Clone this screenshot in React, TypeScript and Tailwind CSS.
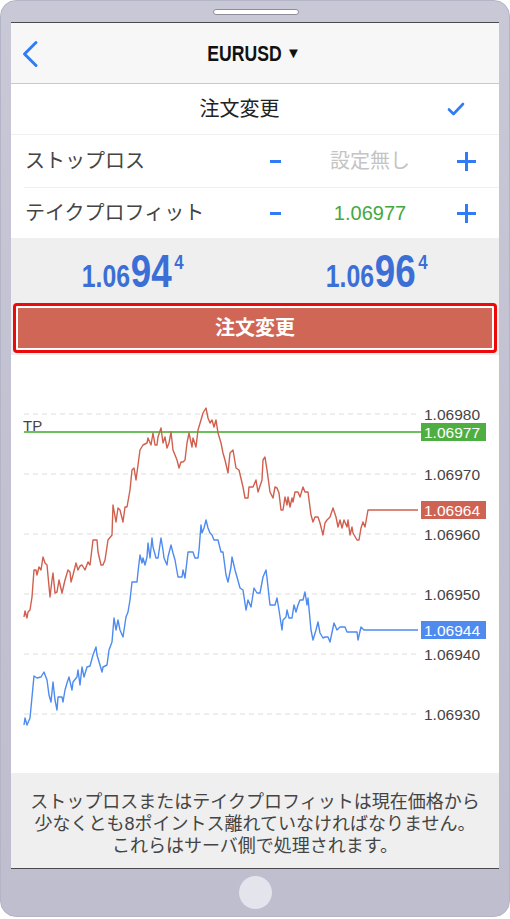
const JP = { fontFamily: '"Liberation Sans", "Noto Sans CJK JP", sans-serif' };
const SANS = { fontFamily: '"Liberation Sans", sans-serif' };

const red: [number, number][] = [
  [24,617],[25,611],[27,618],[28,612],[30,610],[32,597],[34,570],[36,570],[37,575],[39,567],[41,570],[43,557],[45,563],[47,565],[50,597],[52,580],[53,573],[55,593],[57,592],[59,580],[62,593],[65,580],[68,570],[70,572],[71,582],[73,575],[76,563],[78,570],[80,566],[82,565],[85,570],[88,562],[90,565],[93,540],[97,540],[98,552],[101,565],[103,565],[105,560],[108,540],[112,535],[113,505],[116,522],[118,508],[120,510],[123,522],[125,507],[127,507],[130,490],[132,470],[134,468],[136,480],[140,450],[143,445],[147,443],[148,438],[151,445],[153,433],[155,445],[157,445],[158,437],[161,428],[163,443],[165,437],[167,448],[169,443],[171,432],[173,450],[177,460],[179,468],[181,462],[183,462],[185,460],[187,443],[189,433],[192,447],[193,438],[196,447],[198,430],[201,420],[203,413],[206,408],[208,418],[210,423],[212,420],[214,427],[216,420],[218,433],[221,443],[223,453],[225,460],[228,473],[230,453],[233,450],[236,468],[239,470],[243,487],[245,498],[248,498],[249,487],[253,487],[256,480],[258,492],[262,480],[263,460],[265,457],[267,470],[270,492],[273,498],[275,487],[277,488],[279,493],[281,510],[283,510],[285,497],[287,505],[288,497],[290,507],[292,498],[293,502],[295,492],[298,492],[300,497],[303,487],[305,492],[308,492],[311,515],[313,522],[315,517],[318,517],[320,523],[323,535],[325,523],[327,520],[330,517],[333,508],[336,517],[338,527],[340,520],[342,528],[344,520],[347,527],[348,520],[350,535],[352,527],[353,533],[357,540],[359,540],[361,528],[363,522],[365,527],[368,510],[418,510],
];

const blue: [number, number][] = [
  [24,725],[25,718],[27,725],[30,718],[34,676],[37,678],[41,677],[44,672],[47,680],[49,695],[51,702],[53,682],[55,700],[57,710],[58,697],[62,697],[63,702],[65,690],[67,683],[69,677],[72,690],[73,682],[77,677],[78,670],[80,685],[82,667],[84,677],[87,667],[90,666],[93,655],[96,647],[97,655],[100,665],[102,672],[103,667],[107,665],[109,650],[112,642],[114,618],[116,630],[118,620],[120,630],[123,637],[126,617],[128,612],[130,600],[132,582],[137,582],[138,572],[140,555],[142,563],[143,558],[145,565],[147,557],[148,543],[150,558],[152,538],[153,547],[156,558],[158,558],[161,538],[163,550],[164,558],[167,565],[168,557],[171,545],[173,553],[175,560],[178,577],[182,577],[183,570],[185,578],[188,552],[193,552],[195,558],[198,558],[199,550],[201,525],[202,533],[204,528],[206,520],[208,528],[210,533],[212,535],[214,540],[218,540],[221,552],[223,552],[226,575],[228,582],[231,567],[232,557],[235,570],[237,577],[240,588],[243,590],[246,610],[248,600],[251,607],[254,588],[257,593],[260,593],[263,577],[266,570],[267,578],[270,605],[275,605],[277,598],[279,610],[282,630],[283,620],[286,617],[287,610],[289,618],[292,618],[294,605],[296,612],[298,605],[300,600],[303,600],[305,592],[307,605],[308,598],[311,630],[313,640],[316,630],[318,622],[320,633],[323,638],[325,637],[328,637],[330,642],[334,623],[337,630],[340,627],[345,627],[347,632],[357,632],[358,640],[361,627],[364,630],[368,630],[418,630],
];

const grid = [
  { y: 414, label: '1.06980' },
  { y: 474, label: '1.06970' },
  { y: 534, label: '1.06960' },
  { y: 594, label: '1.06950' },
  { y: 654, label: '1.06940' },
  { y: 714, label: '1.06930' },
];

const tags = [
  { y: 432, label: '1.06977', color: '#4fae42' },
  { y: 510, label: '1.06964', color: '#cf6353' },
  { y: 630, label: '1.06944', color: '#4f8bee' },
];

const pts = (p: [number, number][]) => p.map(([x, y]) => `${x},${y}`).join(' ');

function Chart() {
  return (
    <svg width="488" height="418" viewBox="11 355 488 418" className="block" style={SANS}>
      {grid.map((g) => (
        <g key={g.label}>
          <line x1="24" x2="418" y1={g.y} y2={g.y} stroke="#dcdcdc" strokeWidth="1" strokeDasharray="5 4" />
          <text x="424" y={g.y + 6} fontSize="15.5" fill="#444">{g.label}</text>
        </g>
      ))}
      <text x="23" y="431" fontSize="15" fill="#444">TP</text>
      <line x1="24" x2="421" y1="432" y2="432" stroke="#6cbf5c" strokeWidth="2" />
      <polyline points={pts(red)} fill="none" stroke="#d05f4e" strokeWidth="1.4" strokeLinejoin="round" />
      <polyline points={pts(blue)} fill="none" stroke="#4d8bf0" strokeWidth="1.4" strokeLinejoin="round" />
      {tags.map((t) => (
        <g key={t.label}>
          <rect x="421" y={t.y - 9} width="65" height="18" fill={t.color} />
          <text x="424" y={t.y + 6} fontSize="15.5" fill="#fff">{t.label}</text>
        </g>
      ))}
    </svg>
  );
}

function Price({ base, big, sup }: { base: string; big: string; sup: string }) {
  return (
    <div className="flex-1 flex justify-center">
      <div className="flex items-baseline leading-none font-bold text-[#3b6fd6] scale-x-[0.8]" style={SANS}>
        <span className="text-[31px]">{base}</span>
        <span className="text-[46px] ml-[1px]">{big}</span>
        <span className="text-[21px] self-start mt-[3px] ml-[3px]">{sup}</span>
      </div>
    </div>
  );
}

function Stepper({ label, value, valueClass }: { label: string; value: string; valueClass: string }) {
  return (
    <div className="flex items-center h-full">
      <div className="flex-1 pl-[14px] text-[20px] text-[#444]" style={JP}>{label}</div>
      <div className="w-[40px] flex justify-center">
        <div className="w-[11px] h-[3px] bg-[#2f7cf6]" />
      </div>
      <div className={`w-[150px] text-center text-[20px] ${valueClass}`} style={JP}>{value}</div>
      <div className="w-[42px] flex justify-center">
        <div className="relative w-[19px] h-[19px]">
          <div className="absolute left-0 top-[8px] w-[19px] h-[3px] bg-[#2f7cf6]" />
          <div className="absolute top-0 left-[8px] w-[3px] h-[19px] bg-[#2f7cf6]" />
        </div>
      </div>
      <div className="w-[12px]" />
    </div>
  );
}

export default function App() {
  return (
    <div className="w-[510px] h-[919px] bg-white">
      <div className="w-[510px] h-[917px] rounded-[16px] bg-gradient-to-b from-[#c8c8d7] via-[#c1c1d1] to-[#bebecf] border border-[#b4b4c7] pt-[21px] px-[10px] relative">
        <div className="absolute left-[212px] top-[8px] w-[86px] h-[6px] rounded-full bg-white border border-[#8f8f9c]" />
        <div className="w-[488px] h-[847px] bg-white border-t border-b border-[#4a4a4a] flex flex-col">
          <div className="h-[61px] bg-[#f7f7f7] border-b border-[#c9c9cc] relative flex items-center justify-center shrink-0">
            <svg className="absolute left-[10px] top-[17px]" width="18" height="28" viewBox="0 0 18 28">
              <path d="M15 2.5 L3.5 14 L15 25.5" fill="none" stroke="#2f7cf6" strokeWidth="3" strokeLinecap="round" strokeLinejoin="round" />
            </svg>
            <div className="flex items-center gap-[4px] text-[#111] font-bold -ml-[2px]" style={SANS}>
              <span className="text-[22px] inline-block scale-x-[0.8] -mx-[9px]">EURUSD</span>
              <span className="text-[15px]">▼</span>
            </div>
          </div>
          <div className="h-[51px] border-b border-[#f0f0f0] relative flex items-center shrink-0">
            <div className="w-full pr-[31px] text-center text-[20px] text-[#222]" style={JP}>注文変更</div>
            <svg className="absolute left-[436px] top-[18px]" width="18" height="14" viewBox="0 0 18 14">
              <path d="M2 7.5 L6.5 12 L16 2" fill="none" stroke="#2f7cf6" strokeWidth="2.6" strokeLinecap="round" strokeLinejoin="round" />
            </svg>
          </div>
          <div className="h-[53px] shrink-0 flex flex-col">
            <div className="flex-1"><Stepper label="ストップロス" value="設定無し" valueClass="text-[#c4c4c4]" /></div>
            <div className="ml-[13px] h-px bg-[#f0f0f0]" />
          </div>
          <div className="h-[50px] shrink-0">
            <Stepper label="テイクプロフィット" value="1.06977" valueClass="text-[#45a83e]" />
          </div>
          <div className="h-[117px] bg-[#efefef] shrink-0 flex flex-col">
            <div className="h-[63px] flex items-center pt-[3px]">
              <Price base="1.06" big="94" sup="4" />
              <Price base="1.06" big="96" sup="4" />
            </div>
            <div className="mx-[2px] mt-[2px] h-[50px] rounded-[4px] border-[3px] border-[#ec0a0a] bg-white p-[2px]">
              <div className="h-full bg-[#cf6656] flex items-center justify-center text-white text-[20px] font-bold" style={JP}>
                注文変更
              </div>
            </div>
          </div>
          <div className="h-[418px] shrink-0">
            <Chart />
          </div>
          <div className="flex-1 bg-[#efefef] pt-[18px] text-center text-[18px] leading-[22px] text-[#444]" style={JP}>
            <div>ストップロスまたはテイクプロフィットは現在価格から</div>
            <div>少なくとも8ポイントス離れていなければなりません。</div>
            <div>これらはサーバ側で処理されます。</div>
          </div>
        </div>
        <div className="absolute left-[238px] top-[875px] w-[33px] h-[33px] rounded-full bg-[#e4e4ec]" />
      </div>
    </div>
  );
}
